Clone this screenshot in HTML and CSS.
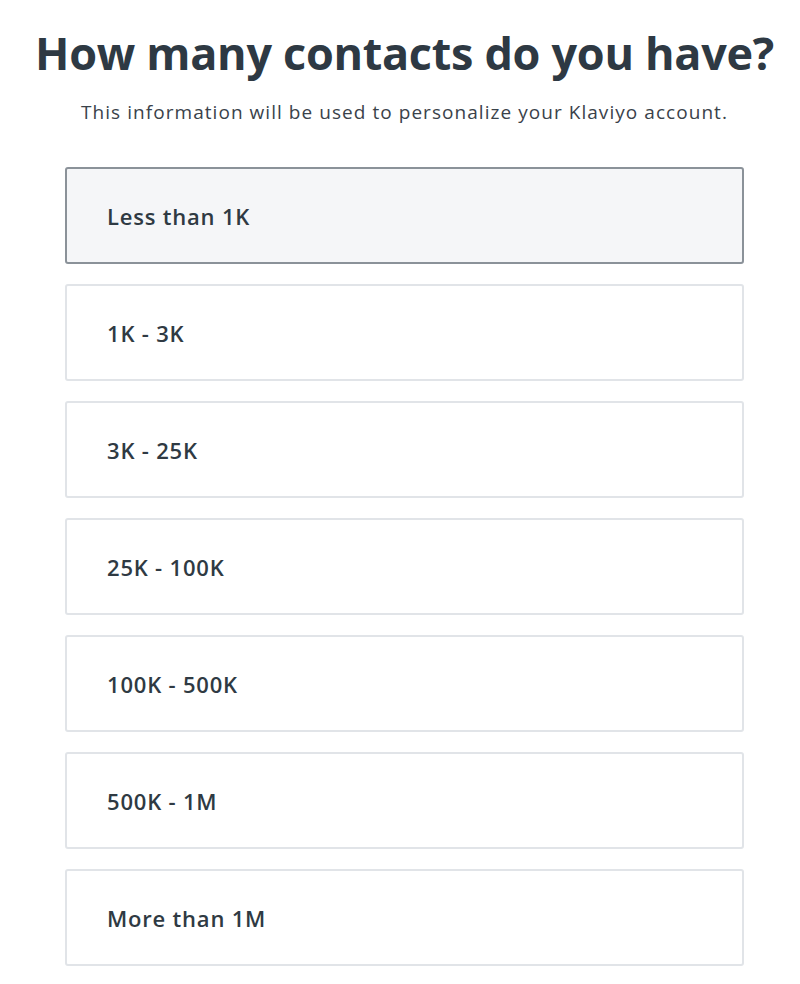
FILE: index.html
```html
<!DOCTYPE html>
<html lang="en">
<head>
    <meta charset="UTF-8">
    <meta name="viewport" content="width=device-width, initial-scale=1.0">
    <title>How many contacts do you have?</title>
    <link rel="stylesheet" href="styles.css">
</head>
<body>
    <main class="page">
        <h1 class="title">How many contacts do you have?</h1>
        <p class="subtitle">This information will be used to personalize your Klaviyo account.</p>
        <div class="options">
            <button class="option selected">Less than 1K</button>
            <button class="option">1K - 3K</button>
            <button class="option">3K - 25K</button>
            <button class="option">25K - 100K</button>
            <button class="option">100K - 500K</button>
            <button class="option">500K - 1M</button>
            <button class="option">More than 1M</button>
        </div>
    </main>
</body>
</html>
```

FILE: styles.css
```css
body {
    margin: 0;
    padding: 0;
    background-color: #fff;
    font-family: "Open Sans", Lato, Arial, sans-serif;
    color: #2f3a44;
}
.page {
    padding: 24px 0 0 9px;
    text-align: center;
}
.title {
    margin: 0;
    font-size: 45px;
    line-height: 58px;
    font-weight: 700;
    color: #2e3943;
    letter-spacing: -0.3px;
}
.subtitle {
    margin: 18px 0 0;
    font-size: 19px;
    line-height: 24px;
    color: #3a424a;
    letter-spacing: 1.05px;
}
.options {
    display: flex;
    flex-direction: column;
    gap: 20px;
    margin: 43px 56px 0;
}
.option {
    display: block;
    width: 100%;
    height: 97px;
    padding: 0 0 0 40px;
    text-align: left;
    font-family: inherit;
    font-size: 22px;
    font-weight: 600;
    letter-spacing: 0.8px;
    color: #2f3a43;
    background-color: #fff;
    border: 2px solid #e1e4e8;
    border-radius: 3px;
    cursor: pointer;
}
.option.selected {
    background-color: #f5f6f8;
    border-color: #8b9299;
}
```
